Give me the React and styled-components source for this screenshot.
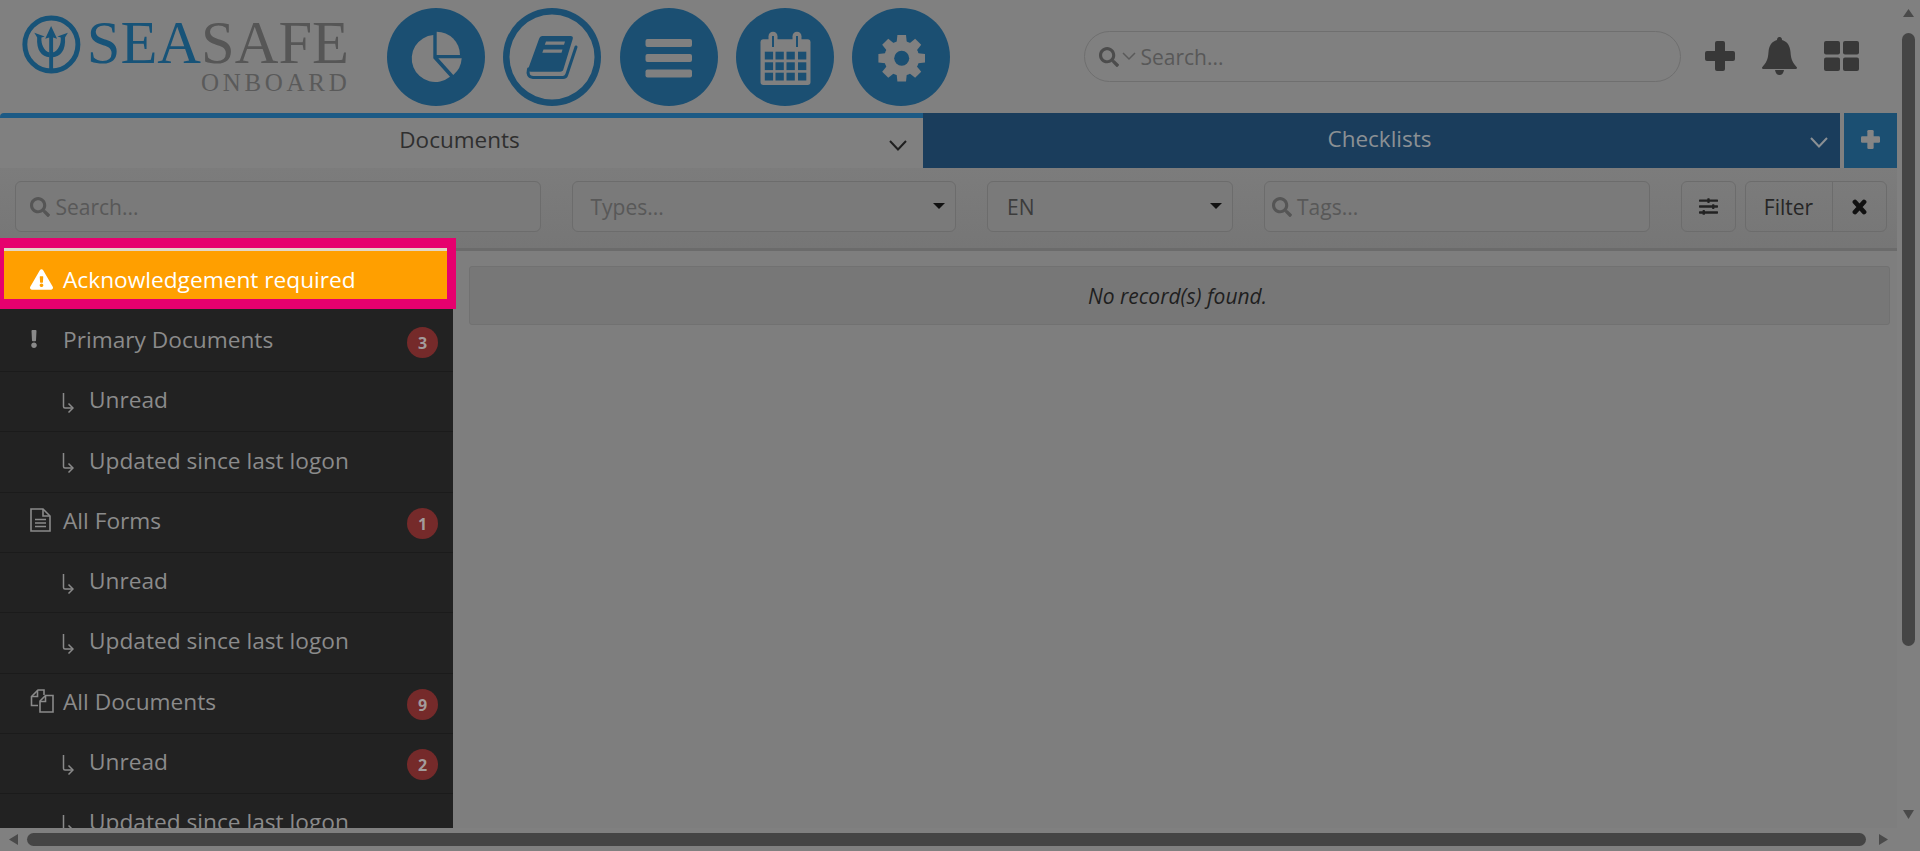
import React from "react";
import styled, { createGlobalStyle } from "styled-components";
import { FaExclamation, FaExclamationTriangle, FaSearch, FaSlidersH } from "react-icons/fa";

const BLUE = "#1b4f72";
const GREY = "#808080";

const Global = createGlobalStyle`
  html, body { margin: 0; padding: 0; height: 100%; background: ${GREY}; overflow: hidden; }
  * { box-sizing: border-box; }
  body { font-family: "Open Sans", "Liberation Sans", sans-serif; }
`;

const Page = styled.div`
  display: grid;
  grid-template-columns: 1897px 23px;
  grid-template-rows: 828px 23px;
  width: 1920px;
  height: 851px;
  background: ${GREY};
  overflow: hidden;
`;

const Main = styled.div`
  display: flex;
  flex-direction: column;
  min-height: 0;
  min-width: 0;
`;

const Header = styled.header`
  display: flex;
  align-items: flex-start;
  height: 113px;
  padding-left: 22px;
`;

const Logo = styled.div`
  display: flex;
  gap: 6px;
  width: 327px;
  margin-top: 14px;
`;

const LogoWords = styled.div`
  display: flex;
  flex-direction: column;
  align-items: flex-end;
  font-family: "Liberation Serif", serif;
`;

const LogoMain = styled.div`
  font-size: 60.5px;
  line-height: 56px;
  height: 57px;
  padding-top: 1px;
  white-space: nowrap;
  color: #565656;
`;

const LogoSea = styled.span`
  color: #175378;
`;

const LogoSub = styled.div`
  font-size: 25px;
  line-height: 24px;
  letter-spacing: 3.7px;
  margin-right: -1.5px;
  color: #5a5a5a;
`;

const Nav = styled.nav`
  display: flex;
  gap: 18.25px;
  margin-left: 38px;
  margin-top: 8px;
`;

const NavCircle = styled.div`
  width: 98px;
  height: 98px;
  border-radius: 50%;
  background: ${(p) => (p.$ring ? "transparent" : BLUE)};
  box-shadow: ${(p) => (p.$ring ? `inset 0 0 0 6.5px ${BLUE}` : "none")};
  svg { display: block; }
`;

const TopSearch = styled.div`
  display: flex;
  align-items: center;
  width: 597px;
  height: 51px;
  margin-left: 133.5px;
  margin-top: 31px;
  padding-left: 14px;
  border: 1.5px solid #6f6f6f;
  border-radius: 26px;
  color: #4c4c4c;
`;

const Placeholder = styled.span`
  color: #585858;
  font-size: 21px;
  margin-left: ${(p) => p.$ml || 0}px;
`;

const Actions = styled.div`
  display: flex;
  align-items: center;
  gap: 27px;
  margin-left: 24px;
  margin-top: 37px;
  height: 38px;
  svg { display: block; }
`;

const TabRow = styled.div`
  display: flex;
  height: 55px;
  flex: none;
`;

const DocTab = styled.div`
  position: relative;
  display: flex;
  align-items: center;
  justify-content: center;
  width: 923px;
  border-top: 5px solid #1c5a85;
  border-top-left-radius: 4px;
  padding: 0 4px 7px 0;
  font-size: 22.5px;
  color: #2f2f2f;
`;

const CheckTab = styled.div`
  position: relative;
  display: flex;
  align-items: center;
  justify-content: center;
  width: 917px;
  background: #1a3d5c;
  padding: 0 4px 4px 0;
  font-size: 22.5px;
  color: #8b9094;
`;

const TabChevron = styled.svg`
  position: absolute;
  right: ${(p) => p.$right}px;
  top: ${(p) => p.$top}px;
`;

const AddTab = styled.div`
  display: flex;
  align-items: center;
  justify-content: center;
  width: 53px;
  margin-left: 4px;
  background: ${BLUE};
  padding-bottom: 2px;
`;

const FilterRow = styled.div`
  display: flex;
  flex: none;
  gap: 31px;
  height: 83px;
  padding: 13px 0 0 14.5px;
  background: linear-gradient(#7c7c7c, #767676);
  border-bottom: 3px solid #6b6b6b;
`;

const Field = styled.div`
  position: relative;
  display: flex;
  align-items: center;
  flex: none;
  width: ${(p) => p.$w}px;
  height: 51px;
  padding-left: ${(p) => p.$pl}px;
  border: 1.5px solid #6c6c6c;
  border-radius: 6px;
  background: #7a7a7a;
  color: #555;
`;

const FieldValue = styled.span`
  font-size: 21px;
  color: #3c3c3c;
`;

const Caret = styled.i`
  position: absolute;
  right: 10px;
  top: 21px;
  width: 0;
  height: 0;
  border-left: 6px solid transparent;
  border-right: 6px solid transparent;
  border-top: 6.5px solid #111;
`;

const IconButton = styled.div`
  display: flex;
  align-items: center;
  justify-content: center;
  flex: none;
  width: 55px;
  height: 51px;
  border: 1.5px solid #6c6c6c;
  border-radius: 6px;
  color: #222;
`;

const ButtonGroup = styled.div`
  display: flex;
  flex: none;
  width: 142px;
  height: 51px;
  margin-left: -22.5px;
  border: 1.5px solid #6c6c6c;
  border-radius: 6px;
  color: #262626;
`;

const GroupLabel = styled.div`
  display: flex;
  align-items: center;
  justify-content: center;
  width: 87px;
  border-right: 1.5px solid #6c6c6c;
  font-size: 21px;
`;

const GroupIcon = styled.div`
  display: flex;
  align-items: center;
  justify-content: center;
  flex: 1;
`;

const Body = styled.div`
  display: flex;
  flex: 1;
  min-height: 0;
  background: #7e7e7e;
`;

const Sidebar = styled.aside`
  position: relative;
  flex: none;
  width: 453px;
  height: 100%;
`;

const RowList = styled.div`
  height: 100%;
  overflow: hidden;
  background: #222;
`;

const AlertRow = styled.div`
  display: flex;
  align-items: center;
  height: 59.7px;
  padding: 0 0 0 30px;
  background: #ff9f00;
  border-bottom: 3px solid #222;
  color: #fff;
  font-size: 22.7px;
`;

const Highlight = styled.div`
  position: absolute;
  left: 0;
  top: -13px;
  width: 456px;
  height: 71px;
  border-style: solid;
  border-color: #e6006e;
  border-width: 10px 9px 10px 4px;
  &::after {
    content: "";
    display: block;
    height: 3px;
    background: #e2d6c6;
  }
`;

const Row = styled.div`
  position: relative;
  display: flex;
  align-items: center;
  height: 60.33px;
  padding-left: ${(p) => (p.$sub ? 62 : 30)}px;
  padding-bottom: 4px;
  border-top: 1px solid ${(p) => (p.$first ? "#222" : "#1b1b1b")};
  color: #8b8b8b;
  font-size: 22.7px;
  white-space: nowrap;
`;

const RowIcon = styled.span`
  display: flex;
  align-items: center;
  flex: none;
  width: ${(p) => (p.$sub ? 27 : 33)}px;
  margin-top: ${(p) => (p.$sub ? 7 : 0)}px;
  color: ${(p) => (p.$light ? "#fff" : "#8a8a8a")};
  svg { margin-left: ${(p) => p.$shift || 0}px; }
`;

const Badge = styled.span`
  position: absolute;
  right: 15px;
  top: 15.5px;
  display: flex;
  align-items: center;
  justify-content: center;
  width: 31px;
  height: 31px;
  border-radius: 50%;
  background: #752a2a;
  color: #a39b9b;
  font-size: 16px;
  font-weight: 700;
`;

const Content = styled.section`
  flex: 1;
  padding: 15px 7px 0 16px;
`;

const EmptyPanel = styled.div`
  display: flex;
  align-items: center;
  justify-content: center;
  height: 59px;
  padding-right: 4px;
  border: 1px solid #717171;
  border-radius: 3px;
  background: #777;
  color: #1f1f1f;
  font-size: 21px;
  font-style: italic;
`;

const VBar = styled.div`
  display: flex;
  flex-direction: column;
  align-items: center;
  padding: 9px 0 0 0;
`;

const VThumb = styled.div`
  width: 13px;
  height: 613px;
  margin-top: 16px;
  border-radius: 7px;
  background: #454545;
`;

const HBar = styled.div`
  grid-column: 1 / 3;
  display: flex;
  align-items: center;
  padding: 0 0 0 9px;
  height: 23px;
`;

const HThumb = styled.div`
  width: 1839px;
  height: 13px;
  margin: 0 13px 0 9px;
  border-radius: 7px;
  background: #454545;
`;

const Arrow = styled.svg`
  flex: none;
  display: block;
  margin-top: ${(p) => p.$mt || 0}px;
`;

const SmallChevron = styled.svg`
  flex: none;
  margin-left: 3px;
`;

const Trident = () => (
  <svg width="62" height="61" viewBox="0 0 62 61" fill="none">
    <circle cx="31" cy="30.5" r="28" stroke="#175378" strokeWidth="5.2" />
    <g fill="#175378">
      <path d="M30.700 11 L37 24.500 L32.800 23 V57 H28.700 V23 L24.500 24.500 Z" />
      <path d="M13 18 L24 22 L20.500 23 C20 30 23 37 29 39 V44 C21 43 15 37 16 23 Z" />
      <path d="M48.400 18 L37.400 22 L40.900 23 C41.400 30 38.400 37 32.400 39 V44 C40.400 43 46.400 37 45.400 23 Z" />
    </g>
  </svg>
);

const PieIcon = () => (
  <svg width="98" height="98" viewBox="0 0 98 98" fill={GREY}>
    <path d="M46.300 27 A23.500 23.500 0 1 0 63 68.700 L46.300 50.300 Z" />
    <path d="M49.700 47 V23.700 A23.300 23.300 0 0 1 73 47 Z" />
    <path d="M51.300 50.300 H74.700 A23.400 23.400 0 0 1 66.300 67 Z" />
  </svg>
);

const BookIcon = () => (
  <svg width="98" height="98" viewBox="0 0 98 98">
    <path
      d="M39.500 28 H67.500 Q70.500 28 69.700 31 L60.500 61 Q60 63.700 57 63.700 H28 Q24.500 63.700 25.500 60 L36 31 Q37 28 39.500 28 Z"
      fill={BLUE}
    />
    <path
      d="M25.500 61 Q23.500 69 30 69.500 H60 Q63 69.500 64 66 L73 39"
      fill="none"
      stroke={BLUE}
      strokeWidth="3"
      strokeLinecap="round"
    />
    <path d="M43 33.500 H62 L61 36.800 H41.800 Z M40.500 41.500 H59.500 L58.500 44.800 H39.300 Z" fill={GREY} />
  </svg>
);

const BarsIcon = () => (
  <svg width="98" height="98" viewBox="0 0 98 98" fill={GREY}>
    <rect x="25.500" y="31" width="46.500" height="8" rx="2" />
    <rect x="25.500" y="46" width="46.500" height="8" rx="2" />
    <rect x="25.500" y="61.500" width="46.500" height="8" rx="2" />
  </svg>
);

const CalendarIcon = () => {
  const xs = [28.8, 39.5, 50.5, 62];
  const ys = [43.7, 54.3, 64.7];
  return (
    <svg width="98" height="98" viewBox="0 0 98 98">
      <rect x="24.500" y="31.300" width="50" height="45.700" rx="3" fill={GREY} />
      <rect x="32.500" y="23.700" width="9" height="17" rx="4.500" fill={GREY} />
      <rect x="56.500" y="23.700" width="9" height="17" rx="4.500" fill={GREY} />
      <rect x="36" y="28" width="2" height="11" fill={BLUE} />
      <rect x="60" y="28" width="2" height="11" fill={BLUE} />
      {ys.map((y) =>
        xs.map((x) => <rect key={`${x}-${y}`} x={x} y={y} width="8.300" height="7.800" fill={BLUE} />)
      )}
    </svg>
  );
};

const GearIcon = () => (
  <svg width="98" height="98" viewBox="0 0 98 98">
    <g transform="translate(49.700 50.300)" fill={GREY}>
      <circle r="17.500" />
      {[0, 45, 90, 135, 180, 225, 270, 315].map((a) => (
        <path key={a} d="M-5.500 -12 L-4.300 -23.300 H4.300 L5.500 -12 Z" transform={`rotate(${a})`} />
      ))}
      <circle r="7.500" fill={BLUE} />
    </g>
  </svg>
);

const Chevron = ({ color, right, top }) => (
  <TabChevron $right={right} $top={top} width="18" height="11" viewBox="0 0 18 11" fill="none">
    <path d="M1 1 L9 9.500 L17 1" stroke={color} strokeWidth="2" />
  </TabChevron>
);

const PlusIcon = ({ size, color }) => (
  <svg width={size} height={size} viewBox="0 0 30 30" fill={color}>
    <rect x="10" y="0" width="10" height="30" rx="2" />
    <rect x="0" y="10" width="30" height="10" rx="2" />
  </svg>
);

const BellIcon = () => (
  <svg width="35" height="38" viewBox="0 0 35 38" fill="#383838">
    <path d="M17.500 0 C19.500 0 20 1.500 20 3 C25.500 4.500 28 9 28.500 15 C29 23 31 26 35 30.500 C35 31.500 34.500 32 33 32 H2 C0.500 32 0 31.500 0 30.500 C4 26 6 23 6.500 15 C7 9 9.500 4.500 15 3 C15 1.500 15.500 0 17.500 0 Z" />
    <path d="M13 33 H22 C21.500 36 20 38 17.500 38 C15 38 13.500 36 13 33 Z" />
  </svg>
);

const TilesIcon = () => (
  <svg width="35" height="30" viewBox="0 0 35 30" fill="#383838">
    <rect x="0" y="0" width="16" height="13.500" rx="2" />
    <rect x="19" y="0" width="16" height="13.500" rx="2" />
    <rect x="0" y="16.500" width="16" height="13.500" rx="2" />
    <rect x="19" y="16.500" width="16" height="13.500" rx="2" />
  </svg>
);

const CrossIcon = () => (
  <svg width="15" height="16" viewBox="0 0 15 16" fill="none" stroke="#111" strokeWidth="4.800" strokeLinecap="round">
    <path d="M3 3 L12 13 M12 3 L3 13" />
  </svg>
);

const SubArrow = () => (
  <svg width="12" height="21" viewBox="0 0 12 21" fill="none" stroke="#8a8a8a" strokeWidth="1.500">
    <path d="M1.500 0 V13.500 Q1.500 15 3 15 H10" />
    <path d="M6.500 10.500 L11 15 L6.500 19.500" />
  </svg>
);

const FileIcon = () => (
  <svg width="21" height="24" viewBox="0 0 21 24" fill="none" stroke="#8a8a8a" strokeWidth="1.600">
    <path d="M1 1 H13 L20 8 V23 H1 Z" />
    <path d="M13 1 V8 H20" />
    <path d="M5 11.500 H16 M5 15 H16 M5 18.500 H16" strokeWidth="1.400" />
  </svg>
);

const CopiesIcon = () => (
  <svg width="24" height="24" viewBox="0 0 24 24" fill="none" stroke="#8a8a8a" strokeWidth="1.600">
    <path d="M8 16.500 H1.500 V7.500 L8 1 H14 V6" />
    <path d="M7.500 1.500 V7.500 H2" />
    <path d="M10 23 H23 V6.500 H15.500 L10 12 Z" fill="#222" />
    <path d="M15.500 7 V12.500 H10" />
  </svg>
);

const TriangleUp = (p) => (
  <Arrow {...p} width="11" height="8" viewBox="0 0 11 8"><path d="M5.500 0 L11 8 H0 Z" fill="#4a4a4a" /></Arrow>
);
const TriangleDown = (p) => (
  <Arrow {...p} width="11" height="9" viewBox="0 0 11 9"><path d="M5.500 9 L11 0 H0 Z" fill="#4a4a4a" /></Arrow>
);
const TriangleLeft = (p) => (
  <Arrow {...p} width="9" height="11" viewBox="0 0 9 11"><path d="M0 5.500 L9 0 V11 Z" fill="#4a4a4a" /></Arrow>
);
const TriangleRight = (p) => (
  <Arrow {...p} width="9" height="11" viewBox="0 0 9 11"><path d="M9 5.500 L0 0 V11 Z" fill="#4a4a4a" /></Arrow>
);

const rows = [
  { label: "Primary Documents", icon: <FaExclamation size={18} />, shift: -5, badge: 3, first: true },
  { label: "Unread", sub: true },
  { label: "Updated since last logon", sub: true },
  { label: "All Forms", icon: <FileIcon />, badge: 1 },
  { label: "Unread", sub: true },
  { label: "Updated since last logon", sub: true },
  { label: "All Documents", icon: <CopiesIcon />, badge: 9 },
  { label: "Unread", sub: true, badge: 2 },
  { label: "Updated since last logon", sub: true },
];

export default function App() {
  return (
    <Page>
      <Global />
      <Main>
        <Header>
          <Logo>
            <Trident />
            <LogoWords>
              <LogoMain>
                <LogoSea>SEA</LogoSea>SAFE
              </LogoMain>
              <LogoSub>ONBOARD</LogoSub>
            </LogoWords>
          </Logo>
          <Nav>
            <NavCircle><PieIcon /></NavCircle>
            <NavCircle $ring><BookIcon /></NavCircle>
            <NavCircle><BarsIcon /></NavCircle>
            <NavCircle><CalendarIcon /></NavCircle>
            <NavCircle><GearIcon /></NavCircle>
          </Nav>
          <TopSearch>
            <FaSearch size={20} />
            <SmallChevron width="14" height="9" viewBox="0 0 14 9" fill="none">
              <path d="M1 1 L7 7 L13 1" stroke="#5a5a5a" strokeWidth="1.500" />
            </SmallChevron>
            <Placeholder $ml={5}>Search...</Placeholder>
          </TopSearch>
          <Actions>
            <PlusIcon size={30} color="#383838" />
            <BellIcon />
            <TilesIcon />
          </Actions>
        </Header>
        <TabRow>
          <DocTab>
            Documents
            <Chevron color="#1f1f1f" right={16} top={22} />
          </DocTab>
          <CheckTab>
            Checklists
            <Chevron color="#8b9094" right={12} top={24} />
          </CheckTab>
          <AddTab><PlusIcon size={19} color="#858585" /></AddTab>
        </TabRow>
        <FilterRow>
          <Field $w={526} $pl={14}>
            <FaSearch size={20} />
            <Placeholder $ml={6}>Search...</Placeholder>
          </Field>
          <Field $w={384.5} $pl={18}>
            <Placeholder>Types...</Placeholder>
            <Caret />
          </Field>
          <Field $w={246} $pl={19}>
            <FieldValue>EN</FieldValue>
            <Caret />
          </Field>
          <Field $w={386} $pl={7}>
            <FaSearch size={20} />
            <Placeholder $ml={5}>Tags...</Placeholder>
          </Field>
          <IconButton><FaSlidersH size={19} /></IconButton>
          <ButtonGroup>
            <GroupLabel>Filter</GroupLabel>
            <GroupIcon><CrossIcon /></GroupIcon>
          </ButtonGroup>
        </FilterRow>
        <Body>
          <Sidebar>
            <RowList>
              <AlertRow>
                <RowIcon $light>
                  <FaExclamationTriangle size={23} />
                </RowIcon>
                Acknowledgement required
              </AlertRow>
              {rows.map((r, i) => (
                <Row key={i} $sub={r.sub} $first={r.first}>
                  <RowIcon $sub={r.sub} $shift={r.shift}>{r.sub ? <SubArrow /> : r.icon}</RowIcon>
                  {r.label}
                  {r.badge ? <Badge>{r.badge}</Badge> : null}
                </Row>
              ))}
            </RowList>
            <Highlight />
          </Sidebar>
          <Content>
            <EmptyPanel>No record(s) found.</EmptyPanel>
          </Content>
        </Body>
      </Main>
      <VBar>
        <TriangleUp />
        <VThumb />
        <TriangleDown $mt={164} />
      </VBar>
      <HBar>
        <TriangleLeft />
        <HThumb />
        <TriangleRight />
      </HBar>
    </Page>
  );
}
